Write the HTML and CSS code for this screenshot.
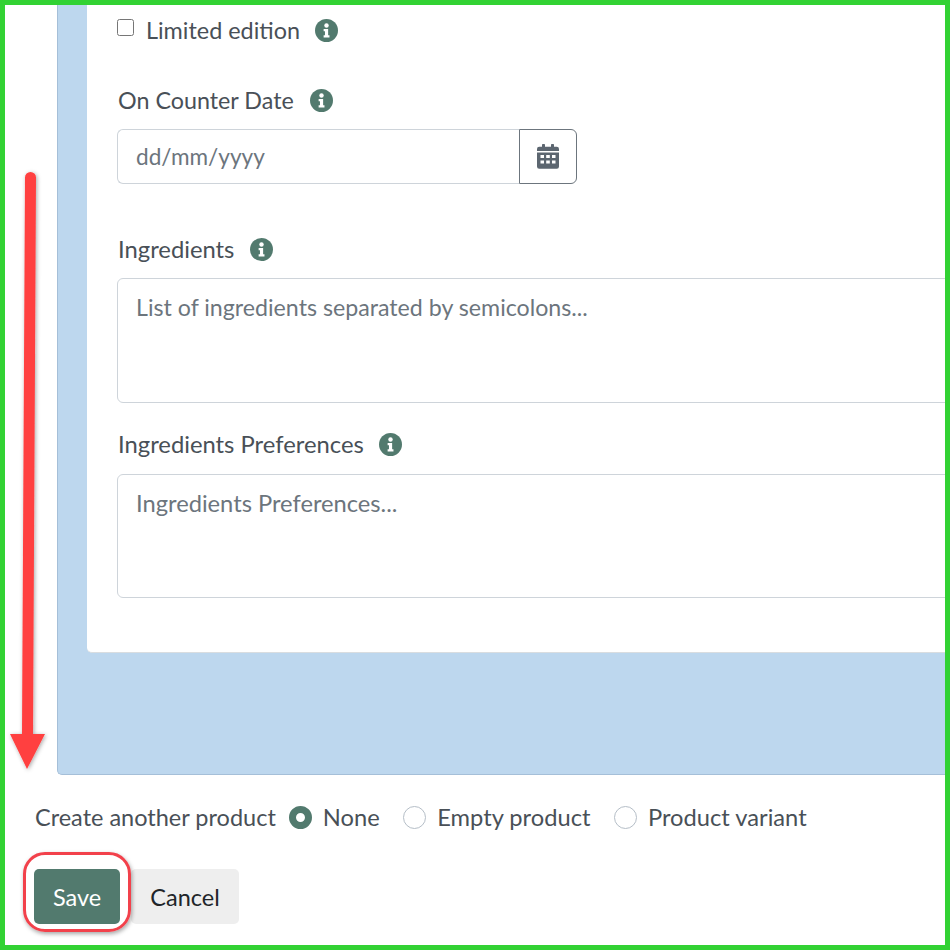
FILE: index.html
```html
<!DOCTYPE html>
<html lang="en">
<head>
    <meta charset="UTF-8">
    <title>Edit product</title>
    <link rel="stylesheet" href="styles.css">
</head>
<body>
    <div class="frame">
        <svg width="0" height="0" class="defs">
            <symbol id="info" viewBox="0 0 24 24">
                <circle cx="12" cy="12" r="12" fill="#527a6e"/>
                <circle cx="12" cy="6.800" r="2.300" fill="#fff"/>
                <path d="M9 10.400h4.700v6.600h1.400v2.300H9V17h1.400v-4.300H9z" fill="#fff"/>
            </symbol>
        </svg>

        <div class="panel">
            <div class="card">
                <div class="check-row">
                    <input type="checkbox" class="check">
                    <span class="check-label">Limited edition</span>
                    <svg class="info info-check"><use href="#info"/></svg>
                </div>

                <div class="label label-date">On Counter Date <svg class="info"><use href="#info"/></svg></div>
                <div class="date-group">
                    <div class="date-input">dd/mm/yyyy</div>
                    <div class="date-btn">
                        <svg width="22" height="25" viewBox="0 0 22 25">
                            <path fill="#5c6670" d="M0 8.500h22v14a2.200 2.200 0 0 1-2.200 2.200H2.200a2.200 2.200 0 0 1-2.200-2.200zM2.200 2.800h2.800V.8a.8.8 0 0 1 .8-.8h1.400a.8.8 0 0 1 .8.8v2h6V.8a.8.8 0 0 1 .8-.8h1.400a.8.8 0 0 1 .8.8v2h2.800A2.200 2.200 0 0 1 22 5v2H0V5a2.200 2.200 0 0 1 2.200-2.200z"/>
                            <path fill="#fff" d="M3.500 11h3.500v3H3.500zM9.200 11h3.600v3H9.200zM15 11h3.500v3H15zM3.500 16.500h3.500v3H3.500zM9.200 16.500h3.600v3H9.200zM15 16.500h3.500v3H15z"/>
                        </svg>
                    </div>
                </div>

                <div class="label label-ingredients">Ingredients <svg class="info"><use href="#info"/></svg></div>
                <div class="textarea textarea-list">List of ingredients separated by semicolons...</div>

                <div class="label label-prefs">Ingredients Preferences <svg class="info"><use href="#info"/></svg></div>
                <div class="textarea textarea-prefs">Ingredients Preferences...</div>
            </div>
        </div>

        <div class="another">
            <span class="another-label">Create another product</span>
            <span class="radio radio-on"></span><span class="radio-text">None</span>
            <span class="radio"></span><span class="radio-text">Empty product</span>
            <span class="radio"></span><span class="radio-text">Product variant</span>
        </div>

        <div class="actions">
            <button class="btn btn-save">Save</button>
            <button class="btn btn-cancel">Cancel</button>
            <span class="highlight"></span>
        </div>

        <!-- annotation arrow on top of the screenshot -->
        <svg class="arrow" width="50" height="620" viewBox="0 0 50 620">
            <defs>
                <filter id="soft" x="-40%" y="-5%" width="180%" height="110%">
                    <feDropShadow dx="1" dy="1" stdDeviation="2" flood-color="#000" flood-opacity=".35"/>
                </filter>
            </defs>
            <path filter="url(#soft)" fill="#ff4040" d="M20 17.500a5.500 5.500 0 0 1 11 0L28 574H40L22 609 5 574H17z"/>
        </svg>
    </div>
</body>
</html>
```

FILE: styles.css
```css
* {
    box-sizing: border-box;
}

body {
    margin: 0;
    background-color: #fff;
    font-family: Lato, "Open Sans", sans-serif;
    font-size: 23.5px;
    color: #495057;
}

.frame {
    position: relative;
    width: 950px;
    height: 950px;
    border: 5px solid #32d233;
    overflow: hidden;
    background-color: #fff;
}

.defs {
    position: absolute;
}

.panel {
    margin-left: 52px;
    width: 900px;
    height: 770px;
    padding-left: 29px;
    background-color: #bdd7ee;
    border-left: 1px solid #a5bfd8;
    border-bottom: 1px solid #a5bfd8;
    border-bottom-left-radius: 5px;
}

.card {
    height: 648px;
    padding-left: 30px;
    background-color: #fff;
    border-bottom: 1px solid #d9dde0;
    border-bottom-left-radius: 5px;
}

.check-row {
    display: flex;
    align-items: center;
    height: 50px;
}

.check {
    width: 17px;
    height: 17px;
    margin: 0 12px 5px 0;
}

.check-label {
    line-height: 50px;
    font-size: 23.4px;
}

.info {
    width: 23px;
    height: 23px;
    margin-left: 9px;
    vertical-align: -3px;
}

.info-check {
    margin-left: 15px;
}

.label {
    padding-left: 1px;
    line-height: 34px;
}

.label-date {
    margin-top: 28px;
    font-size: 23.3px;
}

.label-date .info {
    margin-left: 10px;
}

.label-ingredients {
    margin-top: 48px;
    font-size: 23.8px;
}

.label-prefs {
    margin-top: 24px;
    font-size: 23.8px;
}

.date-group {
    display: flex;
    width: 460px;
    height: 55px;
    margin-top: 12px;
}

.date-input {
    flex: 1;
    padding-left: 18px;
    line-height: 53px;
    font-size: 22.6px;
    color: #6c757d;
    border: 1px solid #ced4da;
    border-right: none;
    border-radius: 6px 0 0 6px;
}

.date-btn {
    display: flex;
    align-items: center;
    justify-content: center;
    width: 58px;
    border: 1px solid #6c757d;
    border-radius: 0 6px 6px 0;
}

.textarea {
    width: 900px;
    height: 124.5px;
    margin-top: 12px;
    padding: 10px 18px;
    line-height: 36px;
    color: #6c757d;
    border: 1px solid #ced4da;
    border-radius: 6px;
}

.textarea-list {
    font-size: 23.2px;
}

.textarea-prefs {
    margin-top: 13px;
    font-size: 23.7px;
}

.another {
    display: flex;
    align-items: center;
    height: 34px;
    margin-top: 25px;
    padding-left: 30px;
}

.another-label {
    margin-right: 13px;
}

.radio {
    width: 23px;
    height: 23px;
    margin-right: 11px;
    border: 1.5px solid #b5bec7;
    border-radius: 50%;
}

.radio-on {
    border: 7px solid #527a6e;
}

.radio-text {
    margin-right: 23.5px;
    font-size: 23.7px;
}

.actions {
    position: relative;
    display: flex;
    margin-top: 35px;
    padding-left: 29px;
}

.btn {
    height: 55px;
    border: none;
    font-family: inherit;
    font-size: inherit;
}

.btn-save {
    width: 86px;
    color: #fff;
    background-color: #527a6e;
    border-radius: 5px;
}

.btn-cancel {
    width: 108px;
    margin-left: 11px;
    color: #212529;
    background-color: #eee;
    border-radius: 5px;
}

/* red marker round the save button */
.highlight {
    position: absolute;
    left: 18px;
    top: -17px;
    width: 108px;
    height: 80px;
    border: 3px solid #f2414b;
    border-radius: 22px;
    box-shadow: 1px 2px 4px rgba(0, 0, 0, 0.35);
}

.arrow {
    position: absolute;
    left: 0;
    top: 155px;
}
```
